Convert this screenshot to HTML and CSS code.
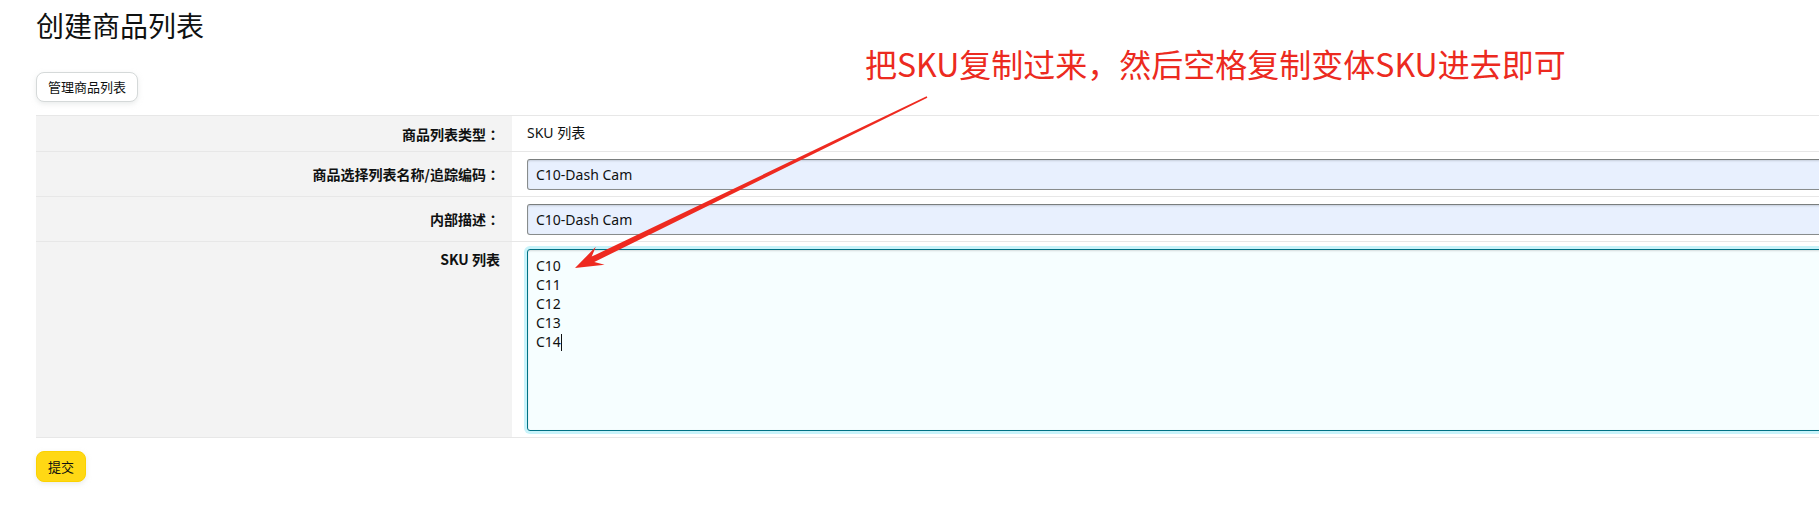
FILE: index.html
```html
<!DOCTYPE html>
<html lang="zh-CN">
<head>
<meta charset="utf-8">
<title>创建商品列表</title>
<link rel="stylesheet" href="styles.css">
</head>
<body>
<div class="page">
  <h1 class="title">创建商品列表</h1>
  <button class="btn btn-manage" type="button">管理商品列表</button>
  <div class="form">
    <div class="row row-type">
      <div class="label">商品列表类型<span class="colon">：</span></div>
      <div class="value">SKU 列表</div>
    </div>
    <div class="row">
      <div class="label">商品选择列表名称/追踪编码<span class="colon">：</span></div>
      <div class="value"><input class="input" type="text" value="C10-Dash Cam"></div>
    </div>
    <div class="row">
      <div class="label">内部描述<span class="colon">：</span></div>
      <div class="value"><input class="input" type="text" value="C10-Dash Cam"></div>
    </div>
    <div class="row row-sku">
      <div class="label label-top">SKU 列表</div>
      <div class="value">
        <div class="textarea" role="textbox" aria-multiline="true">
          <div>C10</div>
          <div>C11</div>
          <div>C12</div>
          <div>C13</div>
          <div>C14<span class="caret"></span></div>
        </div>
      </div>
    </div>
  </div>
  <button class="btn btn-submit" type="button">提交</button>
</div>

<div class="note">把SKU复制过来，然后空格复制变体SKU进去即可</div>
<svg class="arrow" width="1819" height="509" viewBox="0 0 1819 509" aria-hidden="true">
  <polygon points="575,268 604.6,264.8 594.3,262 927.35,97.7 926.65,96.3 591.7,256.6 595.8,246.8" fill="#ee2a20"/>
</svg>
</body>
</html>
```

FILE: styles.css
```css
html, body {
  margin: 0;
  padding: 0;
  overflow: hidden;
  background: #ffffff;
}

body {
  font-family: "Noto Sans", "Noto Sans CJK SC", sans-serif;
  color: #0f1111;
  position: relative;
  width: 1819px;
  height: 509px;
}

.page {
  padding: 8px 0 0 36px;
}

.title {
  margin: 0;
  font-size: 28px;
  line-height: 34px;
  font-weight: 400;
  color: #0f1111;
  font-family: "Noto Sans CJK SC", sans-serif;
}

.btn {
  display: block;
  font-family: "Noto Sans CJK SC", sans-serif;
  font-size: 13px;
  line-height: 19px;
  color: #0f1111;
  border-radius: 8px;
  cursor: pointer;
}

.btn-manage {
  margin-top: 30px;
  padding: 4px 11px 5px;
  background: #ffffff;
  border: 1px solid #d5d9d9;
  box-shadow: 0 2px 5px 0 rgba(213, 217, 217, 0.5);
}

.form {
  margin-top: 13px;
  width: 1900px;
  border-bottom: 1px solid #e7e7e7;
}

.row {
  display: grid;
  grid-template-columns: 476px 1fr;
  border-top: 1px solid #e7e7e7;
}

.label {
  background: #f3f3f3;
  text-align: right;
  padding: 0 12px 0 0;
  font-family: "Noto Sans CJK SC", sans-serif;
  font-size: 14px;
  line-height: 20px;
  font-weight: 700;
  display: flex;
  align-items: center;
  justify-content: flex-end;
}

.colon {
  font-family: "Noto Sans CJK TC", "Noto Sans CJK SC", sans-serif;
}

.label-top {
  align-items: flex-start;
  padding-top: 7px;
}

.value {
  padding: 7px 0 6px 15px;
  font-size: 14px;
  line-height: 18px;
}

.row-type .value {
  padding-top: 8px;
  padding-bottom: 9px;
  font-family: "Noto Sans", "Noto Sans CJK SC", sans-serif;
}

.input {
  display: block;
  box-sizing: border-box;
  width: 1380px;
  height: 31px;
  margin: 0;
  padding: 0 8px;
  border: 1px solid #888c8c;
  border-top-color: #7a7e7e;
  border-radius: 3px;
  background: #e8f0fe;
  box-shadow: inset 0 1px 2px rgba(15, 17, 17, 0.15);
  font-family: "Noto Sans", "Noto Sans CJK SC", sans-serif;
  font-size: 14px;
  color: #0f1111;
  outline: none;
}

.textarea {
  box-sizing: border-box;
  width: 1380px;
  height: 182px;
  padding: 6px 8px;
  border: 1px solid #007185;
  border-radius: 3px;
  background: #f6feff;
  box-shadow: 0 0 0 3px #c8f3fa, inset 0 1px 2px rgba(15, 17, 17, 0.15);
  font-family: "Noto Sans", "Noto Sans CJK SC", sans-serif;
  font-size: 14px;
  line-height: 19px;
  color: #0f1111;
}

.caret {
  display: inline-block;
  width: 1px;
  height: 17px;
  background: #0f1111;
  vertical-align: -4px;
}

.btn-submit {
  margin-top: 13px;
  padding: 5px 11px;
  background: #ffd814;
  border: 1px solid #fcd200;
  box-shadow: 0 2px 5px 0 rgba(213, 217, 217, 0.5);
}

.note {
  position: absolute;
  left: 865px;
  top: 45px;
  font-family: "Noto Sans CJK SC", sans-serif;
  font-size: 32px;
  line-height: 36px;
  color: #ec2a20;
  white-space: nowrap;
}

.arrow {
  position: absolute;
  left: 0;
  top: 0;
  pointer-events: none;
}
```
